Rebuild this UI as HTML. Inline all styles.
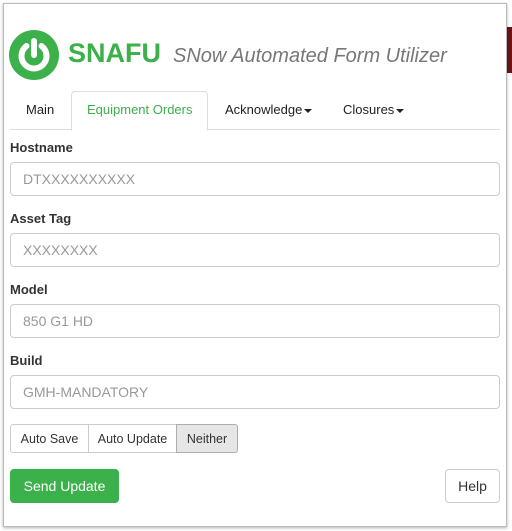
<!DOCTYPE html>
<html><head><style>
body{margin:0;width:512px;height:531px;background:#fff;position:relative;overflow:hidden;font-family:"Liberation Sans",Arial,sans-serif;font-size:13px;color:#333}
.bg{position:absolute;right:0;top:27px;width:8px;height:46px;background:#6b1414}
.pop{position:absolute;left:3px;top:3px;width:502px;height:522px;background:#fff;border:1px solid #bbb;box-shadow:0 1px 3px rgba(0,0,0,.3)}
.abs{position:absolute}
.tab{position:absolute;top:92px;height:37px;line-height:35px;font-size:13px;color:#222}
.lbl{position:absolute;left:10px;font-weight:bold;font-size:13px;color:#333}
.inp{position:absolute;left:10px;width:476px;height:32px;border:1px solid #ccc;border-radius:4px;color:#999;font-size:14px;line-height:32px;padding-left:12px;box-sizing:content-box}
.car{display:inline-block;width:0;height:0;border-left:4px solid transparent;border-right:4px solid transparent;border-top:4px solid #222;vertical-align:middle;margin-left:2px}
.bg2{position:absolute;top:424px;height:29px;line-height:29px;border:1px solid #ccc;text-align:center;font-size:12.5px;color:#333;box-sizing:border-box}
</style></head><body>
<div class="bg"></div>
<div class="pop"></div>
<svg class="abs" style="left:9px;top:30px" width="52" height="52" viewBox="0 0 52 52">
<circle cx="25" cy="25" r="25" fill="#3cb04a"/>
<path d="M17.5 16 A12.5 12.5 0 1 0 32.5 16" fill="none" stroke="#fff" stroke-width="6" stroke-linecap="round"/>
<line x1="25" y1="11" x2="25" y2="25" stroke="#fff" stroke-width="6" stroke-linecap="round"/>
</svg>
<div class="abs" style="left:68px;top:38px;font-size:27px;font-weight:bold;color:#3cb04a">SNAFU</div>
<div class="abs" style="left:173px;top:45px;font-size:20px;font-style:italic;color:#777">SNow Automated Form Utilizer</div>
<div class="abs" style="left:10px;top:129px;width:490px;height:1px;background:#ddd"></div>
<div class="abs" style="left:71px;top:91px;width:135px;height:38px;border:1px solid #ddd;border-bottom:1px solid #fff;border-radius:4px 4px 0 0;background:#fff"></div>
<div class="tab" style="left:26px">Main</div>
<div class="tab" style="left:87px;color:#3cb04a">Equipment Orders</div>
<div class="tab" style="left:225px">Acknowledge<span class="car"></span></div>
<div class="tab" style="left:343px">Closures<span class="car"></span></div>
<div class="lbl" style="top:140px">Hostname</div>
<div class="inp" style="top:162px">DTXXXXXXXXXX</div>
<div class="lbl" style="top:211px">Asset Tag</div>
<div class="inp" style="top:233px">XXXXXXXX</div>
<div class="lbl" style="top:282px">Model</div>
<div class="inp" style="top:304px">850 G1 HD</div>
<div class="lbl" style="top:353px">Build</div>
<div class="inp" style="top:375px">GMH-MANDATORY</div>
<div class="bg2" style="left:10px;width:79px;border-radius:3px 0 0 3px">Auto Save</div>
<div class="bg2" style="left:88px;width:89px">Auto Update</div>
<div class="bg2" style="left:176px;width:62px;background:#e6e6e6;border-color:#adadad;border-radius:0 3px 3px 0">Neither</div>
<div class="abs" style="left:10px;top:469px;width:109px;height:34px;background:#3cb04a;border-radius:4px;color:#fff;font-size:14px;line-height:34px;text-align:center">Send Update</div>
<div class="abs" style="left:445px;top:469px;width:55px;height:34px;border:1px solid #ccc;box-sizing:border-box;border-radius:4px;font-size:14px;line-height:32px;text-align:center">Help</div>
</body></html>
